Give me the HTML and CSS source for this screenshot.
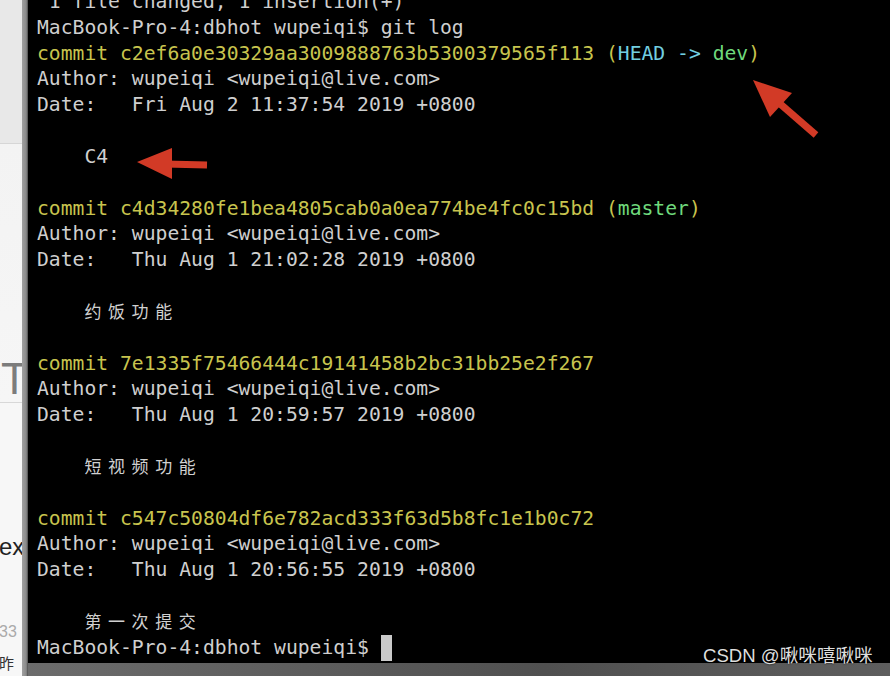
FILE: index.html
```html
<!DOCTYPE html>
<html lang="zh">
<head>
  <meta charset="utf-8">
  <title>git log</title>
<link rel="stylesheet" href="styles.css">
</head>
<body>
  <div class="screen">
    <div class="side">
      <div class="side-top"></div>
      <div class="side-mid">
        <span class="side-t">T</span>
      </div>
      <div class="side-low">
        <span class="side-ex">ex</span>
        <span class="side-num">33</span>
        <span class="side-zuo">昨</span>
      </div>
    </div>
    <div class="edge"></div>
    <div class="main">
      <div class="term">
<pre class="log"> 1 file changed, 1 insertion(+)
MacBook-Pro-4:dbhot wupeiqi$ git log
<span class="y">commit c2ef6a0e30329aa3009888763b5300379565f113 (<span class="c">HEAD -&gt; </span><span class="g">dev</span>)</span>
Author: wupeiqi &lt;wupeiqi@live.com&gt;
Date:   Fri Aug 2 11:37:54 2019 +0800

    C4

<span class="y">commit c4d34280fe1bea4805cab0a0ea774be4fc0c15bd (<span class="g">master</span>)</span>
Author: wupeiqi &lt;wupeiqi@live.com&gt;
Date:   Thu Aug 1 21:02:28 2019 +0800

    <span class="cjk">约饭功能</span>

<span class="y">commit 7e1335f75466444c19141458b2bc31bb25e2f267</span>
Author: wupeiqi &lt;wupeiqi@live.com&gt;
Date:   Thu Aug 1 20:59:57 2019 +0800

    <span class="cjk">短视频功能</span>

<span class="y">commit c547c50804df6e782acd333f63d5b8fc1e1b0c72</span>
Author: wupeiqi &lt;wupeiqi@live.com&gt;
Date:   Thu Aug 1 20:56:55 2019 +0800

    <span class="cjk">第一次提交</span>
MacBook-Pro-4:dbhot wupeiqi$ <span class="cursor"> </span></pre>
      </div>
      <div class="bottom"></div>
    </div>

    <svg class="arrows" width="890" height="676" viewBox="0 0 890 676">
      <line x1="816" y1="135" x2="778" y2="102" stroke="#d23a26" stroke-width="7"/>
      <polygon points="753,80 770,117 792,93" fill="#d23a26"/>
      <line x1="207" y1="165" x2="165" y2="164" stroke="#d23a26" stroke-width="7"/>
      <polygon points="137,162 172,148 172,179" fill="#d23a26"/>
    </svg>

    <div class="watermark">CSDN @啾咪嘻啾咪</div>
  </div>
</body>
</html>
```

FILE: styles.css
```css
html,
body {
  margin: 0;
  padding: 0;
  background: #000;
}

.screen {
  position: relative;
  display: flex;
  width: 890px;
  height: 676px;
  overflow: hidden;
}

/* left: a bit of the window behind */

.side {
  display: flex;
  flex-direction: column;
  width: 22px;
  background: #f2f2f2;
  font-family: "Liberation Sans", "Noto Sans CJK SC", sans-serif;
  overflow: hidden;
}

.side-top {
  height: 143px;
  background: #e8e8e8;
  border-bottom: 1px solid #d6d6d6;
}

.side-mid {
  height: 258px;
  display: flex;
  align-items: flex-end;
  background: linear-gradient(#f3f3f3, #f6f6f6);
  border-bottom: 1px solid #d8d8d8;
}

.side-t {
  margin-left: 1px;
  font-size: 44px;
  line-height: 46px;
  font-weight: 300;
  color: #7c7c7c;
}

.side-low {
  position: relative;
  flex: 1;
  background: #f7f7f7;
}

.side-ex,
.side-num,
.side-zuo {
  position: absolute;
  left: -1px;
  white-space: nowrap;
}

.side-ex {
  top: 130px;
  font-size: 24px;
  color: #222;
}

.side-num {
  top: 220px;
  font-size: 16px;
  color: #aaa;
}

.side-zuo {
  top: 249px;
  font-size: 15px;
  color: #333;
}

.edge {
  width: 6px;
  background: linear-gradient(90deg, #a0a0a0, #8a8a8a 70%, #4a4a4a);
}

/* terminal */

.main {
  flex: 1;
  display: flex;
  flex-direction: column;
}

.term {
  height: 663px;
  background: #000;
  border-bottom-left-radius: 7px;
  overflow: hidden;
}

.bottom {
  flex: 1;
  background: linear-gradient(90deg, #6c6c6c, #505050 60%, #5e5e5e);
}

.log {
  margin: -11px 0 0 9px;
  font-family: "DejaVu Sans Mono", monospace;
  font-size: 19.7px;
  line-height: 25.83px;
  color: #cfcfcf;
}

.y { color: #c8c44e; }
.c { color: #72cfe0; }
.g { color: #6fd97c; }

.cjk {
  font-family: "Noto Sans CJK SC", sans-serif;
  font-size: 17px;
  line-height: 18px;
  letter-spacing: 6.6px;
  color: #d0d0d0;
}

.cursor {
  display: inline-block;
  width: 11px;
  height: 26px;
  vertical-align: top;
  background: #cacaca;
}

/* overlays */

.arrows {
  position: absolute;
  left: 0;
  top: 0;
}

.watermark {
  position: absolute;
  left: 703px;
  top: 644px;
  font-family: "Liberation Sans", "Noto Sans CJK SC", sans-serif;
  font-size: 18.6px;
  line-height: 24px;
  color: #dedede;
  text-shadow: 0 0 2px #000;
}
```
